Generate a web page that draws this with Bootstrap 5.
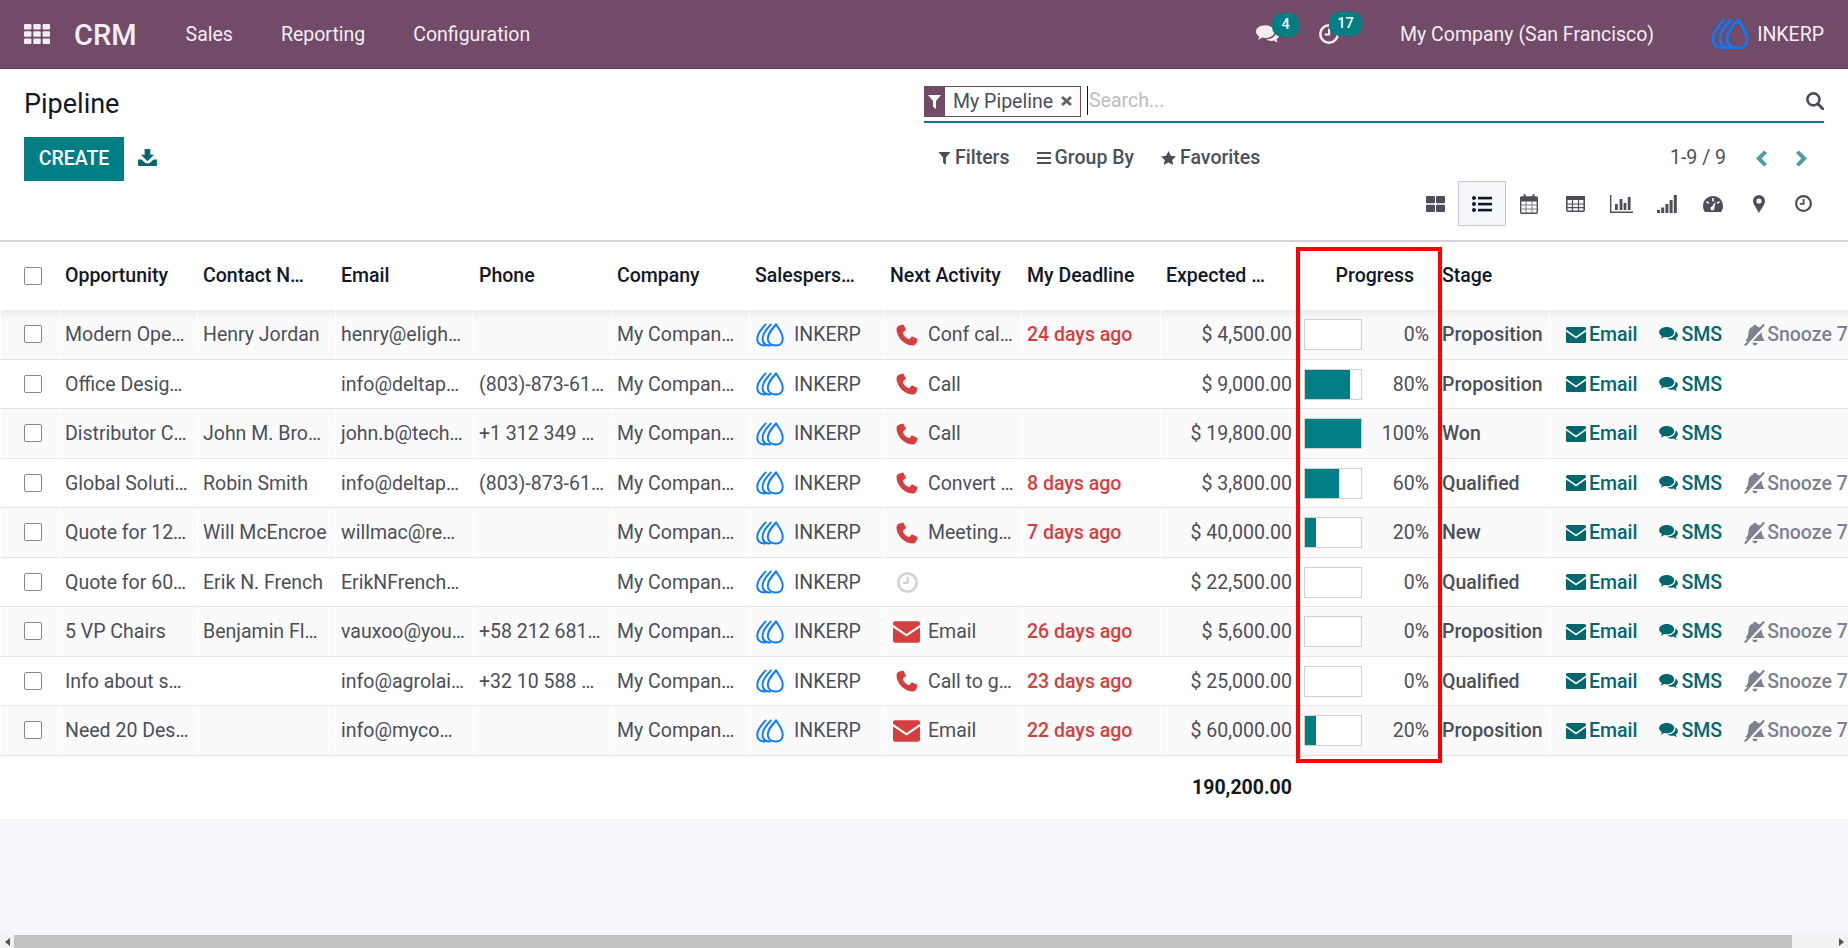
<!DOCTYPE html>
<html lang="en">
<head>
    <meta charset="UTF-8">
    <meta name="viewport" content="width=device-width, initial-scale=1.0">
    <title>Pipeline - CRM</title>
    <link href="https://cdn.jsdelivr.net/npm/bootstrap@5.3.0/dist/css/bootstrap.min.css" rel="stylesheet">
    <style>
        html, body {
            height: 100%;
            overflow: hidden;
        }
        body {
            font-family: Roboto, "Liberation Sans", sans-serif;
            font-size: 19.5px;
            color: #4c4f59;
            background-color: #f5f6fa;
            position: relative;
        }
        /* top bar */
        .top-bar {
            height: 69px;
            background-color: #714b67;
            border-bottom: 1px solid #5c3d54;
            color: #f4eef3;
            padding: 0 24px;
        }
        .top-bar a {
            color: #f4eef3;
            text-decoration: none;
            padding-top: 2px;
        }
        .app-grid { width: 26px; height: 20px; margin-right: 24px; }
        .app-name { font-size: 29px; font-weight: 500; margin-right: 48px; line-height: 1; }
        .menu-gap { gap: 48px; margin-left: 1px; }
        .systray-icon { position: relative; display: block; }
        .count-pill {
            position: absolute;
            top: -12px;
            height: 24px;
            border-radius: 10px;
            background-color: #017e84;
            color: #fff;
            font-size: 14.5px;
            font-weight: 500;
            line-height: 24px;
            text-align: center;
        }
        /* control panel */
        .panel {
            height: 173px;
            background-color: #fff;
            border-bottom: 2px solid #d4d4d4;
        }
        .panel-left { padding: 17px 0 0 24px; }
        .panel-right { padding: 17px 24px 0 0; }
        .page-title { font-size: 27px; font-weight: 400; color: #111827; line-height: 36px; margin: 0 0 15px; }
        .btn-create {
            width: 100px;
            height: 44px;
            padding: 0;
            border-radius: 0;
            border: 0;
            background-color: #017e84;
            color: #fff;
            font-size: 19.5px;
            font-weight: 500;
        }
        .dl-icon { margin-left: 14px; margin-top: -3px; }
        .search-line {
            height: 35px;
            border-bottom: 2px solid #017e84;
            position: relative;
            box-sizing: content-box;
        }
        .facet {
            height: 31px;
            border: 1px solid #714b67;
            color: #4c4f59;
            line-height: 29px;
        }
        .facet-icon {
            width: 21px;
            height: 31px;
            margin: -1px 0 0 -1px;
            background-color: #714b67;
        }
        .search-hint { color: #bdbdbd; margin-left: 6px; padding-left: 1px; border-left: 1px solid #111; line-height: 30px; height: 29px; }
        .search-glass { margin-left: auto; margin-top: 6px; }
        .tool-link { font-weight: 500; color: #4c4f59; }
        .tool-row { margin-top: 20px; height: 30px; padding-left: 14px; padding-right: 17px; }
        .pager-prev { margin-left: 30px; }
        .pager-next { margin-left: 29px; }
        .view-row { margin-top: 8px; height: 45px; margin-right: 0; }
        .view-cell {
            width: 46px;
            height: 45px;
            border: 1px solid transparent;
        }
        .view-cell.is-on { background-color: #f5f6fa; border-color: #c9c9d4; width: 48px; }
        /* table */
        .list-wrap { overflow: hidden; background-color: #fff; }
        .pipe-table {
            table-layout: fixed;
            width: 1990px;
            border-collapse: separate;
            border-spacing: 0;
            margin: 0;
        }
        .pipe-table th {
            height: 68px;
            font-weight: 500;
            color: #111827;
            padding: 0 23px 0 6px;
            border: 0;
            vertical-align: middle;
            white-space: nowrap;
            overflow: hidden;
            text-overflow: ellipsis;
        }
        .pipe-table th.head-full { padding-right: 6px; }
        .pipe-table th.head-progress { padding-right: 22px; text-align: right; }
        .pipe-table td {
            height: 49.5px;
            padding: 1px 7px 0 5px;
            vertical-align: middle;
            white-space: nowrap;
            overflow: hidden;
            text-overflow: ellipsis;
            color: #4c4f59;
            background-color: #fff;
            border-bottom: 1.5px solid #e4e4e4;
            border-left: 1px solid #fff;
        }
        .pipe-table td.text-end { padding-right: 6px; }
        .pipe-table tbody tr:nth-child(odd) td { background-color: #fafafa; }
        .pipe-table tbody tr:first-child td {
            background-image: linear-gradient(#ececec, #fafafa 10px);
        }
        .pipe-table tfoot td {
            height: 63px;
            border: 0;
            background-color: #fff;
            font-weight: 700;
            color: #111827;
        }
        .check-box {
            display: block;
            width: 18px;
            height: 18px;
            margin-left: 24px;
            border: 1.5px solid #888;
            border-radius: 2px;
            background-color: #fff;
        }
        .pipe-table td .check-box { margin-left: 23px; }
        .rep-logo { margin-right: 9px; }
        .late { color: #d63f3f !important; font-weight: 500; }
        .pipe-table td.stage-name { font-weight: 500; padding-right: 0; }
        .pipe-table td.pct-cell { padding-right: 6px; }
        .bar-shell {
            width: 58px;
            height: 31px;
            border: 1.5px solid #d0d0d0;
            background-color: #fff;
            flex-shrink: 0;
        }
        .bar-fill { height: 100%; background-color: #017e84; }
        .pct-row { padding-right: 1px; }
        .pipe-table td.lead-actions { padding-left: 16px; }
        .act-link { font-weight: 500; color: #03686e; }
        .act-muted { font-weight: 500; color: #7e828e; }
        .act-icon { margin-right: 3px; }
        .act-next { margin-left: 22px; }
        .act-snooze { margin-left: 21px; }
        .annot-box {
            position: absolute;
            left: 1296px;
            top: 247px;
            width: 146px;
            height: 516px;
            border: 4px solid #f00;
            pointer-events: none;
        }
        /* bottom scrollbar */
        .h-scroll { height: 13px; background-color: #f1f1f1; margin-top: auto; }
        .h-scroll-btn { width: 14px; }
        .h-scroll-thumb { width: 1778px; background-color: #c1c1c1; }
    </style>
</head>
<body class="d-flex flex-column">

    <svg width="0" height="0" class="position-absolute">
        <symbol id="i-logo" viewBox="0 0 38 32">
            <g fill="none" stroke="#0a7bff" stroke-width="2.6" stroke-linecap="round">
                <path d="M13 2 C8 8 2 13 2 21 C2 27 6 30 12 30"/>
                <path d="M20 2 C15 8 9 13 9 21 C9 27 13 30 19 30"/>
                <path d="M27 2 C21 9 16 14 16 21 C16 27 21 30 27 30 C33 30 36 26 36 21 C36 14 31 8 27 2 Z"/>
            </g>
        </symbol>
        <symbol id="i-phone" viewBox="0 0 18 18">
            <path d="M3.4 1 L6 .4 L8.2 5 L5.6 7 C6 9.6 8.2 11.8 10.8 12.4 L13 10 L17.6 12.2 L17 14.8 C16.7 16.2 15.4 17.6 14 17.6 C7 17.6 .4 11 .4 4 C.4 2.6 2 1.3 3.4 1 Z"/>
        </symbol>
        <symbol id="i-mail" viewBox="0 0 20 16">
            <path d="M1.5 0 H18.5 A1.5 1.5 0 0 1 20 1.5 V2.6 L10 9.4 L0 2.6 V1.5 A1.5 1.5 0 0 1 1.5 0 Z"/>
            <path d="M0 4.6 L10 11.4 L20 4.6 V14.5 A1.5 1.5 0 0 1 18.5 16 H1.5 A1.5 1.5 0 0 1 0 14.5 Z"/>
        </symbol>
        <symbol id="i-chat" viewBox="0 0 20 16">
            <path d="M8 0 C12.4 0 16 2.4 16 5.5 C16 8.6 12.4 11 8 11 C7 11 6.2 10.9 5.3 10.7 C4.2 11.6 3 12.2 1.6 12.5 C2.2 11.6 2.8 10.6 2.9 9.6 C1.1 8.6 0 7.1 0 5.5 C0 2.4 3.6 0 8 0 Z"/>
            <path d="M17.4 4.6 C19 5.6 20 7 20 8.6 C20 10 19.2 11.3 17.8 12.2 C17.9 13.2 18.5 14.2 19 15 C17.7 14.7 16.6 14.2 15.6 13.3 C14.9 13.5 14.2 13.6 13.4 13.6 C11.6 13.6 10 13.1 8.8 12.2 C13.6 12.3 18 9.6 17.4 4.6 Z"/>
        </symbol>
        <symbol id="i-snooze" viewBox="0 0 22 22">
            <path d="M11 1.5 C12 1.5 12.6 2.2 12.6 3 C14.4 3.4 15.6 4.3 16.2 5.4 L5.4 16.6 H2 C4.6 14 5 11.6 5 9 C5 6 7 3.7 9.4 3 C9.4 2.2 10 1.5 11 1.5 Z"/>
            <path d="M17 8.5 C17.3 11.6 18 14.2 20 16.6 H9 Z"/>
            <path d="M8.6 18 H13.4 C13.2 19.4 12.2 20.4 11 20.4 C9.8 20.4 8.8 19.4 8.6 18 Z"/>
            <path d="M18.6 .6 L20 2 L2.4 21.4 L1 20 Z"/>
        </symbol>
        <symbol id="i-clock" viewBox="0 0 20 20">
            <path fill-rule="evenodd" d="M10 0 A10 10 0 1 1 10 20 A10 10 0 1 1 10 0 Z M10 2.6 A7.4 7.4 0 1 0 10 17.4 A7.4 7.4 0 1 0 10 2.6 Z"/>
            <path d="M9 4.6 H11.2 V11.4 H5.6 V9.4 H9 Z"/>
        </symbol>
    </svg>

    <header class="top-bar d-flex align-items-center flex-shrink-0">
        <svg class="app-grid" viewBox="0 0 26 20" fill="#f4eef3">
            <rect width="7.4" height="5.6" rx="1"/><rect x="9.3" width="7.4" height="5.6" rx="1"/><rect x="18.6" width="7.4" height="5.6" rx="1"/>
            <rect y="7.2" width="7.4" height="5.6" rx="1"/><rect x="9.3" y="7.2" width="7.4" height="5.6" rx="1"/><rect x="18.6" y="7.2" width="7.4" height="5.6" rx="1"/>
            <rect y="14.4" width="7.4" height="5.6" rx="1"/><rect x="9.3" y="14.4" width="7.4" height="5.6" rx="1"/><rect x="18.6" y="14.4" width="7.4" height="5.6" rx="1"/>
        </svg>
        <a href="#" class="app-name">CRM</a>
        <nav class="d-flex menu-gap">
            <a href="#">Sales</a>
            <a href="#">Reporting</a>
            <a href="#">Configuration</a>
        </nav>
        <div class="ms-auto d-flex align-items-center">
            <span class="systray-icon">
                <svg class="d-block" width="23" height="19" fill="#f4eef3"><use href="#i-chat"/></svg>
                <span class="count-pill" style="left:16px;width:27px">4</span>
            </span>
            <span class="systray-icon" style="margin-left:40px">
                <svg class="d-block" width="20" height="20" fill="#f4eef3"><use href="#i-clock"/></svg>
                <span class="count-pill" style="left:10px;width:33px">17</span>
            </span>
            <a href="#" style="margin-left:61px">My Company (San Francisco)</a>
            <svg style="margin-left:57px" width="38" height="32"><use href="#i-logo"/></svg>
            <a href="#" style="margin-left:8px">INKERP</a>
        </div>
    </header>

    <section class="panel row g-0 flex-shrink-0">
        <div class="col-6 panel-left">
            <h1 class="page-title">Pipeline</h1>
            <div class="d-flex align-items-center">
                <button class="btn btn-create">CREATE</button>
                <svg class="dl-icon" width="19" height="17" viewBox="0 0 20 18" fill="#03686e">
                    <path d="M7 0 H13 V6 H17 L10 13 L3 6 H7 Z"/>
                    <path d="M0 11 H3.6 L8 15 H12 L16.4 11 H20 V17 A1 1 0 0 1 19 18 H1 A1 1 0 0 1 0 17 Z"/>
                </svg>
            </div>
        </div>
        <div class="col-6 panel-right">
            <div class="search-line d-flex align-items-start">
                <span class="facet d-flex">
                    <span class="facet-icon d-flex align-items-center justify-content-center">
                        <svg width="13" height="14" viewBox="0 0 13 14" fill="#fff"><path d="M0 0 H13 L8 6 V14 L5 11.5 V6 Z"/></svg>
                    </span>
                    <span class="px-2">My Pipeline</span>
                    <svg class="me-2 mt-2" width="11" height="12" viewBox="0 0 11 12" fill="#666"><path d="M2 1 L5.5 4 L9 1 L11 3 L7.6 6 L11 9 L9 11 L5.5 8 L2 11 L0 9 L3.4 6 L0 3 Z"/></svg>
                </span>
                <span class="search-hint">Search...</span>
                <svg class="search-glass" width="18" height="18" viewBox="0 0 18 18" fill="none" stroke="#4c4f59" stroke-width="2.6"><circle cx="7.4" cy="7.4" r="6"/><path d="M11.8 11.8 L17 17" stroke-linecap="round" stroke-width="3"/></svg>
            </div>
            <div class="tool-row d-flex align-items-center">
                <a class="tool-link text-decoration-none d-flex align-items-center" href="#">
                    <svg class="me-1" width="13" height="13" viewBox="0 0 13 14" fill="#4c4f59"><path d="M0 0 H13 L8 6 V14 L5 11.5 V6 Z"/></svg>Filters</a>
                <a class="tool-link text-decoration-none d-flex align-items-center" href="#" style="margin-left:27px">
                    <svg class="me-1" width="14" height="12" viewBox="0 0 14 12" fill="#4c4f59"><rect width="14" height="2"/><rect y="5" width="14" height="2"/><rect y="10" width="14" height="2"/></svg>Group By</a>
                <a class="tool-link text-decoration-none d-flex align-items-center" href="#" style="margin-left:27px">
                    <svg class="me-1" width="15" height="14" viewBox="0 0 15 14" fill="#4c4f59"><path d="M7.5 0 L9.8 4.8 L15 5.4 L11.2 9 L12.2 14 L7.5 11.5 L2.8 14 L3.8 9 L0 5.4 L5.2 4.8 Z"/></svg>Favorites</a>
                <span class="ms-auto">1-9 / 9</span>
                <svg class="pager-prev" width="11" height="17" viewBox="0 0 11 16" fill="#4f9da1"><path d="M8 0 L11 2.6 L5.6 8 L11 13.4 L8 16 L0 8 Z"/></svg>
                <svg class="pager-next" width="11" height="17" viewBox="0 0 11 16" fill="#4f9da1"><path d="M3 0 L0 2.6 L5.4 8 L0 13.4 L3 16 L11 8 Z"/></svg>
            </div>
            <div class="view-row d-flex justify-content-end align-items-center">
                <span class="view-cell d-flex align-items-center justify-content-center">
                    <svg width="19" height="16" fill="#4c4f59"><rect width="9" height="7.2" rx="1"/><rect x="10" width="9" height="7.2" rx="1"/><rect y="8.8" width="9" height="7.2" rx="1"/><rect x="10" y="8.8" width="9" height="7.2" rx="1"/></svg>
                </span>
                <span class="view-cell is-on d-flex align-items-center justify-content-center">
                    <svg width="20" height="16" fill="#111827"><circle cx="2" cy="2" r="2"/><circle cx="2" cy="8" r="2"/><circle cx="2" cy="14" r="2"/><rect x="6" y=".8" width="14" height="2.6"/><rect x="6" y="6.8" width="14" height="2.6"/><rect x="6" y="12.8" width="14" height="2.6"/></svg>
                </span>
                <span class="view-cell d-flex align-items-center justify-content-center">
                    <svg width="18" height="20" viewBox="0 0 18 20"><rect x=".7" y="3" width="16.6" height="16.3" rx="1" fill="#fff" stroke="#4c4f59" stroke-width="1.4"/><rect x="0" y="3" width="18" height="4.5" fill="#4c4f59"/><path d="M6 7 V19 M12 7 V19 M1 11 H17 M1 15 H17" stroke="#7a7d88"/><rect x="3.6" y="0" width="2" height="5" rx="1" fill="#4c4f59"/><rect x="12.4" y="0" width="2" height="5" rx="1" fill="#4c4f59"/></svg>
                </span>
                <span class="view-cell d-flex align-items-center justify-content-center">
                    <svg width="19" height="16" viewBox="0 0 19 16"><rect x=".8" y=".8" width="17.4" height="14.4" rx="1.4" fill="#fff" stroke="#4c4f59" stroke-width="1.6"/><rect y="0" width="19" height="4" fill="#4c4f59"/><path d="M6.5 4 V15 M12.5 4 V15 M1 8 H18 M1 11.6 H18" stroke="#4c4f59" stroke-width="1.2"/></svg>
                </span>
                <span class="view-cell d-flex align-items-center justify-content-center">
                    <svg width="23" height="18" viewBox="0 0 23 18" fill="#4c4f59"><path d="M0 0 H1.4 V16.4 H23 V18 H0 Z"/><rect x="5" y="9" width="2.8" height="6"/><rect x="9.6" y="4" width="2.8" height="11"/><rect x="13.6" y="8" width="2.8" height="7"/><rect x="17.8" y="2" width="2.8" height="13"/></svg>
                </span>
                <span class="view-cell d-flex align-items-center justify-content-center">
                    <svg width="20" height="18" viewBox="0 0 20 18" fill="#4c4f59"><rect y="15" width="3" height="3"/><rect x="4.2" y="12.5" width="3" height="5.5"/><rect x="8.4" y="9" width="3" height="9"/><rect x="12.6" y="5" width="3" height="13"/><rect x="16.8" y="0" width="3" height="18"/></svg>
                </span>
                <span class="view-cell d-flex align-items-center justify-content-center">
                    <svg width="20" height="16" viewBox="0 0 20 16" fill="#4c4f59"><path fill-rule="evenodd" d="M10 0 C15.5 0 20 4.3 20 10 C20 12.3 19.3 14.3 18 16 H2 C.7 14.3 0 12.3 0 10 C0 4.3 4.5 0 10 0 Z M9.2 2 V5.4 H10.8 V2 Z M3.8 5 L3 6.2 L5.6 8 L6.4 6.8 Z M16.2 5 L13.6 6.8 L14.4 8 L17 6.2 Z M12.6 5.6 L9 10.4 A2 2 0 1 0 11.4 12 Z"/></svg>
                </span>
                <span class="view-cell d-flex align-items-center justify-content-center">
                    <svg width="12" height="18" viewBox="0 0 12 18" fill="#4c4f59"><path fill-rule="evenodd" d="M6 0 A6 6 0 0 1 12 6 C12 9.4 8 14 6 18 C4 14 0 9.4 0 6 A6 6 0 0 1 6 0 Z M6 3.4 A2.6 2.6 0 1 0 6 8.6 A2.6 2.6 0 1 0 6 3.4 Z"/></svg>
                </span>
                <span class="view-cell d-flex align-items-center justify-content-center" style="width:42px">
                    <svg width="17" height="17" fill="#4c4f59"><use href="#i-clock"/></svg>
                </span>
            </div>
        </div>
    </section>

    <div class="list-wrap flex-shrink-0">
        <table class="table pipe-table">
            <colgroup>
                <col style="width:59px"><col style="width:138px"><col style="width:138px"><col style="width:138px"><col style="width:138px">
                <col style="width:138px"><col style="width:135px"><col style="width:137px"><col style="width:139px"><col style="width:138px">
                <col style="width:138px"><col style="width:113px"><col>
            </colgroup>
            <thead>
                <tr>
                    <th class="p-0"><span class="check-box"></span></th>
                    <th>Opportunity</th>
                    <th>Contact Name</th>
                    <th>Email</th>
                    <th>Phone</th>
                    <th>Company</th>
                    <th>Salesperson</th>
                    <th class="head-full">Next Activity</th>
                    <th class="head-full">My Deadline</th>
                    <th>Expected Revenue</th>
                    <th class="head-progress">Progress</th>
                    <th>Stage</th>
                    <th></th>
                </tr>
            </thead>
            <tbody id="lead-rows"></tbody>
            <tfoot>
                <tr>
                    <td colspan="10" class="text-end">190,200.00</td>
                    <td colspan="3"></td>
                </tr>
            </tfoot>
        </table>
    </div>

    <div class="h-scroll d-flex flex-shrink-0">
        <span class="h-scroll-btn d-flex align-items-center justify-content-center">
            <svg width="5" height="8" fill="#505050"><path d="M5 0 V8 L0 4 Z"/></svg>
        </span>
        <span class="h-scroll-thumb"></span>
        <span class="h-scroll-btn d-flex align-items-center justify-content-center ms-auto">
            <svg width="5" height="8" fill="#505050"><path d="M0 0 V8 L5 4 Z"/></svg>
        </span>
    </div>

    <div class="annot-box"></div>

    <script>
        const leads = [
            ['Modern Open Space', 'Henry Jordan', 'henry@elight.com', '', 'phone', 'Conf call with CTO', '24 days ago', '4,500.00', 0, 'Proposition', true],
            ['Office Design Project', '', 'info@deltapc.example.com', '(803)-873-6126', 'phone', 'Call', '', '9,000.00', 80, 'Proposition', false],
            ['Distributor Contract', 'John M. Brown', 'john.b@tech.info', '+1 312 349 3030', 'phone', 'Call', '', '19,800.00', 100, 'Won', false],
            ['Global Solutions', 'Robin Smith', 'info@deltapc.example.com', '(803)-873-6126', 'phone', 'Convert to quote', '8 days ago', '3,800.00', 60, 'Qualified', true],
            ['Quote for 12 Tables', 'Will McEncroe', 'willmac@rediffmail.example.com', '', 'phone', 'Meeting to go', '7 days ago', '40,000.00', 20, 'New', true],
            ['Quote for 600 Chairs', 'Erik N. French', 'ErikNFrench@armyspy.com', '', 'none', '', '', '22,500.00', 0, 'Qualified', false],
            ['5 VP Chairs', 'Benjamin Flores', 'vauxoo@yourcompany.example.com', '+58 212 681 0538', 'mail', 'Email', '26 days ago', '5,600.00', 0, 'Proposition', true],
            ['Info about services', '', 'info@agrolait.example.com', '+32 10 588 558', 'phone', 'Call to get system', '23 days ago', '25,000.00', 0, 'Qualified', true],
            ['Need 20 Desks', '', 'info@mycompany.example.com', '', 'mail', 'Email', '22 days ago', '60,000.00', 20, 'Proposition', true]
        ];

        function activityCell(kind, label) {
            if (kind === 'none') {
                return '<svg class="d-block" style="margin-left:7px" width="21" height="21" fill="#d4d4d4"><use href="#i-clock"/></svg>';
            }
            const w = kind === 'mail' ? 27 : 22;
            const left = kind === 'mail' ? 3 : 6;
            const right = kind === 'mail' ? 8 : 10;
            return `<span class="d-flex align-items-center"><svg class="flex-shrink-0" style="margin-left:${left}px;margin-right:${right}px" width="${w}" height="22" fill="#d63f3f"><use href="#i-${kind}"/></svg><span class="text-truncate">${label}</span></span>`;
        }

        document.getElementById('lead-rows').innerHTML = leads.map(l => `
            <tr>
                <td class="p-0"><span class="check-box"></span></td>
                <td>${l[0]}</td>
                <td>${l[1]}</td>
                <td>${l[2]}</td>
                <td>${l[3]}</td>
                <td>My Company (San Francisco)</td>
                <td><span class="d-flex align-items-center"><svg class="rep-logo flex-shrink-0" width="30" height="24"><use href="#i-logo"/></svg>INKERP</span></td>
                <td>${activityCell(l[4], l[5])}</td>
                <td class="late">${l[6]}</td>
                <td class="text-end">$ ${l[7]}</td>
                <td class="pct-cell"><span class="pct-row d-flex align-items-center justify-content-between">
                    <span class="bar-shell d-block"><span class="bar-fill d-block" style="width:${l[8]}%"></span></span>
                    <span>${l[8]}%</span>
                </span></td>
                <td class="stage-name">${l[9]}</td>
                <td class="lead-actions"><span class="d-flex align-items-center">
                    <svg class="act-icon flex-shrink-0" width="20" height="16" fill="#03686e"><use href="#i-mail"/></svg><span class="act-link">Email</span>
                    <svg class="act-icon act-next flex-shrink-0" width="19" height="15" fill="#03686e"><use href="#i-chat"/></svg><span class="act-link">SMS</span>
                    ${l[10] ? '<svg class="act-snooze flex-shrink-0" width="24" height="24" fill="#7e828e"><use href="#i-snooze"/></svg><span class="act-muted">Snooze 7d</span>' : ''}
                </span></td>
            </tr>`).join('');
    </script>
    <script src="https://cdn.jsdelivr.net/npm/bootstrap@5.3.0/dist/js/bootstrap.bundle.min.js"></script>
</body>
</html>
